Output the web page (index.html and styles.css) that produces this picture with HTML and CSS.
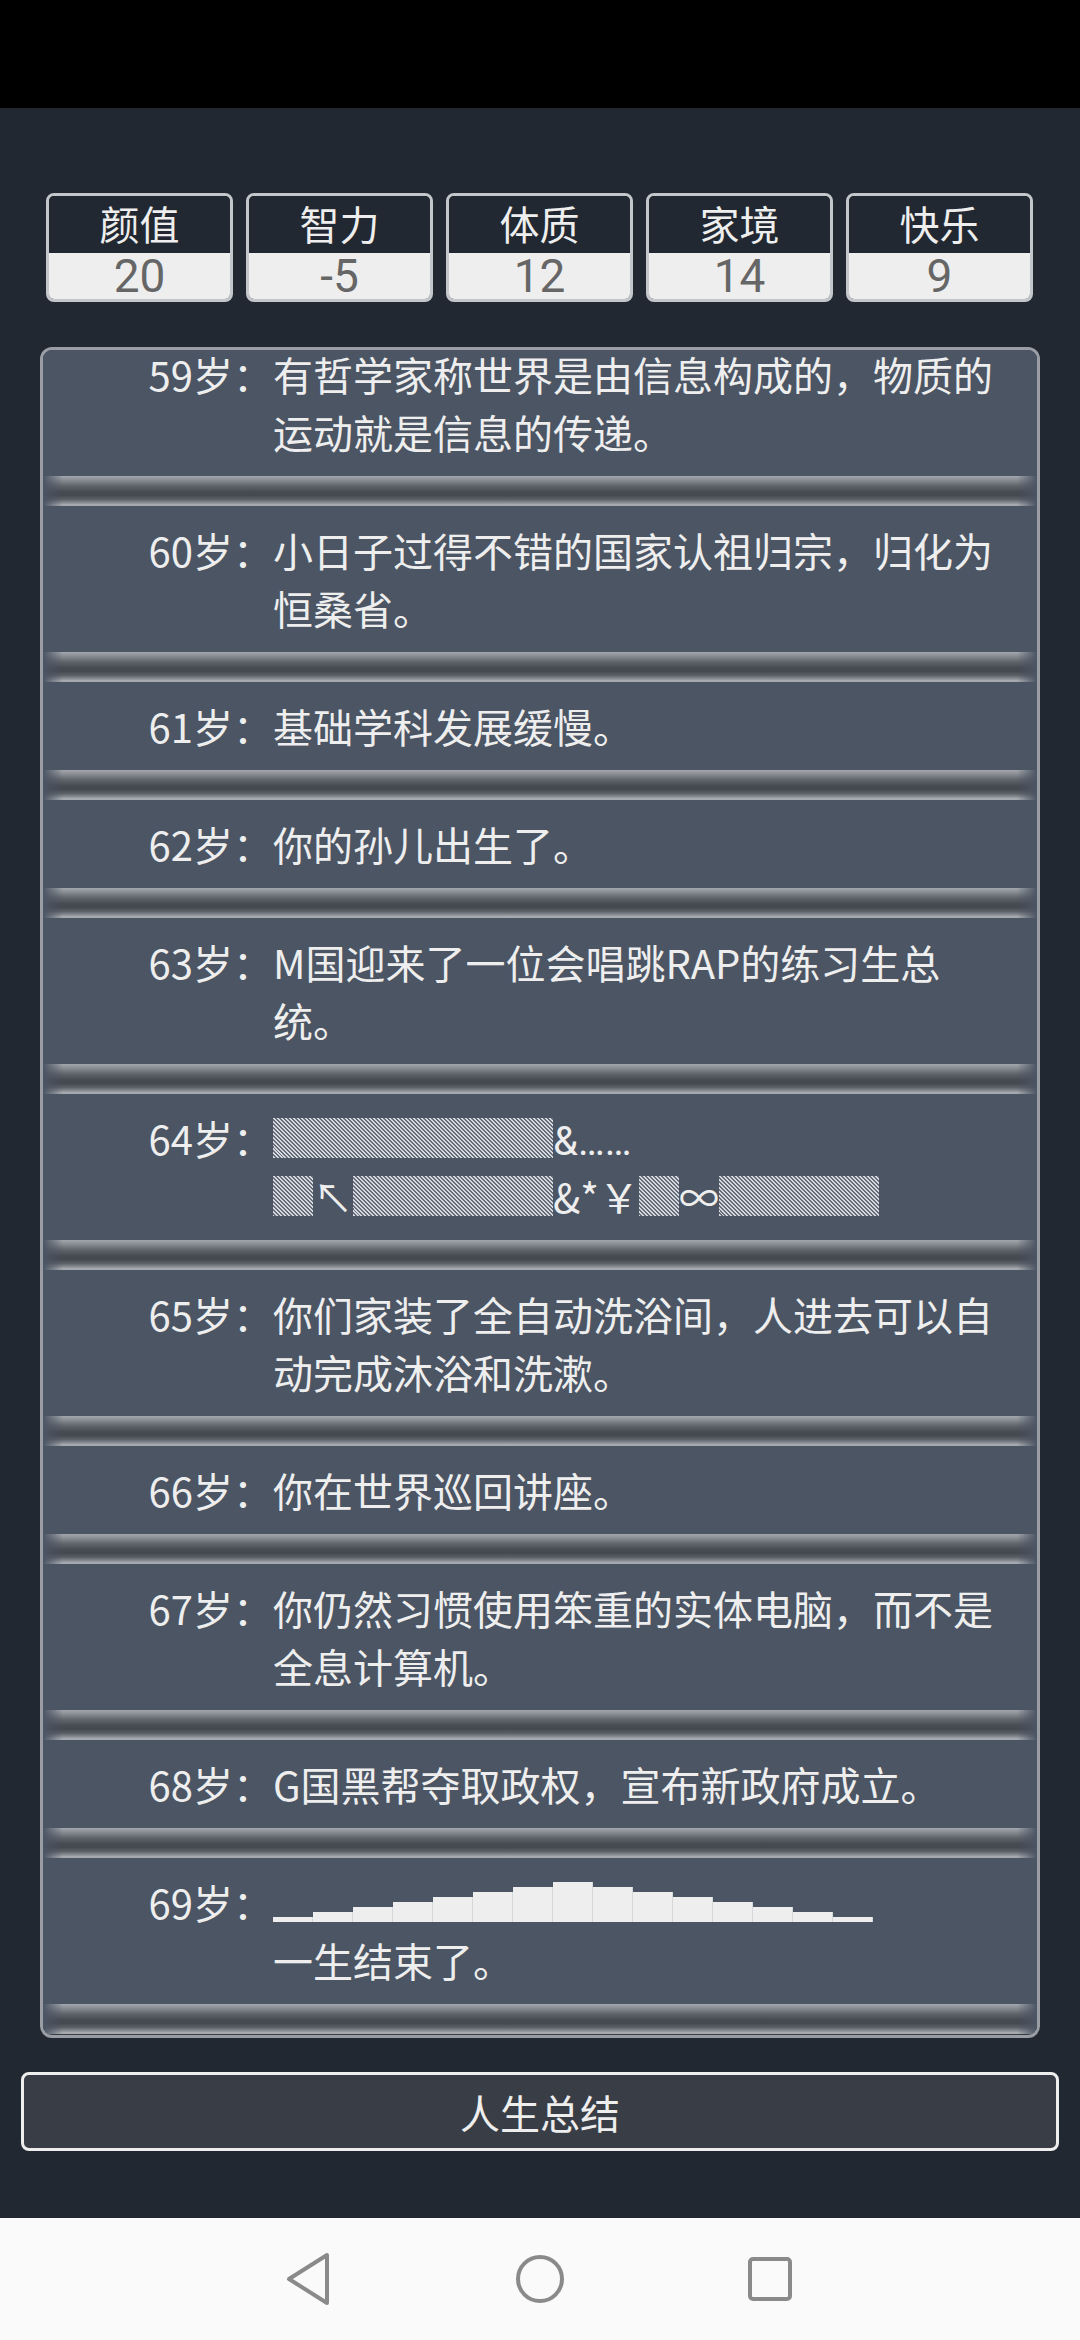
FILE: index.html
```html
<!DOCTYPE html>
<html lang="zh-CN">
<head>
<meta charset="utf-8">
<title>人生重开模拟器</title>
<link rel="stylesheet" href="styles.css">
</head>
<body>
<div class="status"></div>

<ul class="stats">
  <li class="stat"><div class="stat-name">颜值</div><div class="stat-val">20</div></li>
  <li class="stat"><div class="stat-name">智力</div><div class="stat-val">-5</div></li>
  <li class="stat"><div class="stat-name">体质</div><div class="stat-val">12</div></li>
  <li class="stat"><div class="stat-name">家境</div><div class="stat-val">14</div></li>
  <li class="stat"><div class="stat-name">快乐</div><div class="stat-val">9</div></li>
</ul>

<div class="panel">
  <ul class="log">
    <li class="entry"><span class="age">59岁：</span><span class="text">有哲学家称世界是由信息构成的，物质的运动就是信息的传递。</span></li>
    <li class="entry"><span class="age">60岁：</span><span class="text">小日子过得不错的国家认祖归宗，归化为恒桑省。</span></li>
    <li class="entry"><span class="age">61岁：</span><span class="text">基础学科发展缓慢。</span></li>
    <li class="entry"><span class="age">62岁：</span><span class="text">你的孙儿出生了。</span></li>
    <li class="entry"><span class="age">63岁：</span><span class="text">M国迎来了一位会唱跳RAP的练习生总统。</span></li>
    <li class="entry"><span class="age">64岁：</span><span class="text"><span class="hatch w7">░░░░░░░</span><span class="latin">&amp;……</span><br><span class="hatch w1">░</span>↖<span class="hatch w5">░░░░░</span>&amp;*￥<span class="hatch w1">░</span>∞<span class="hatch w4">░░░░</span></span></li>
    <li class="entry"><span class="age">65岁：</span><span class="text">你们家装了全自动洗浴间，人进去可以自动完成沐浴和洗漱。</span></li>
    <li class="entry"><span class="age">66岁：</span><span class="text">你在世界巡回讲座。</span></li>
    <li class="entry"><span class="age">67岁：</span><span class="text">你仍然习惯使用笨重的实体电脑，而不是全息计算机。</span></li>
    <li class="entry"><span class="age">68岁：</span><span class="text">G国黑帮夺取政权，宣布新政府成立。</span></li>
    <li class="entry"><span class="age">69岁：</span><span class="text"><span class="bars"><span class="bar b1">▁</span><span class="bar b2">▂</span><span class="bar b3">▃</span><span class="bar b4">▄</span><span class="bar b5">▅</span><span class="bar b6">▆</span><span class="bar b7">▇</span><span class="bar b8">█</span><span class="bar b7">▇</span><span class="bar b6">▆</span><span class="bar b5">▅</span><span class="bar b4">▄</span><span class="bar b3">▃</span><span class="bar b2">▂</span><span class="bar b1">▁</span></span><br>一生结束了。</span></li>
  </ul>
</div>

<button class="summary" type="button">人生总结</button>

<nav class="navbar">
  <svg class="nav-icon" width="80" height="56" viewBox="0 0 80 56" aria-label="返回">
    <path d="M57 4 L57 52 L19 28 Z" fill="none" stroke="#8a8a8a" stroke-width="4" stroke-linejoin="round"/>
  </svg>
  <svg class="nav-icon" width="80" height="56" viewBox="0 0 80 56" aria-label="主页">
    <circle cx="40" cy="28" r="22" fill="none" stroke="#8a8a8a" stroke-width="4"/>
  </svg>
  <svg class="nav-icon" width="80" height="56" viewBox="0 0 80 56" aria-label="最近">
    <rect x="20" y="8" width="40" height="40" rx="3" fill="none" stroke="#8a8a8a" stroke-width="4"/>
  </svg>
</nav>
</body>
</html>
```

FILE: styles.css
```css
* { box-sizing: border-box; }

html, body {
  margin: 0;
  padding: 0;
}

body {
  width: 1080px;
  height: 2340px;
  background: #222831;
  font-family: "Noto Sans CJK SC", "Noto Sans", sans-serif;
  color: #eeeeee;
  display: flex;
  flex-direction: column;
  overflow: hidden;
}

.status {
  height: 108px;
  background: #000000;
  flex: none;
}

/* stats */
.stats {
  list-style: none;
  margin: 85px 0 0;
  padding: 0 47px 0 46px;
  display: flex;
  gap: 13px;
  flex: none;
}

.stat {
  flex: 1;
  height: 109px;
  border: 3px solid #c3c6ca;
  border-radius: 8px;
  overflow: hidden;
  display: flex;
  flex-direction: column;
}

.stat-name {
  height: 57px;
  line-height: 55px;
  text-align: center;
  font-size: 40px;
  color: #eeeeee;
  background: #222831;
}

.stat-val {
  flex: 1;
  background: #eeeeee;
  color: #666666;
  text-align: center;
  font-family: Roboto, "Noto Sans", sans-serif;
  font-size: 46px;
  line-height: 46px;
}

/* log panel */
.panel {
  margin: 45px 40px 0;
  height: 1691px;
  border: 3px solid #9a9ea4;
  border-radius: 12px;
  overflow: hidden;
  background: #3a3f47;
  flex: none;
}

.log {
  list-style: none;
  margin: -20px 0 0;
  padding: 0;
}

.entry {
  display: grid;
  grid-template-columns: 230px 1fr;
  padding: 15px 32px 45px 0;
  font-size: 40px;
  line-height: 58px;
  color: #eeeeee;
  background:
    linear-gradient(to right, #4b5563 0, rgba(75, 85, 99, 0) 20px, rgba(75, 85, 99, 0) calc(100% - 20px), #4b5563 100%) left bottom / 100% 30px no-repeat,
    linear-gradient(to bottom, #a3a7ad 0%, #8d9197 12%, #61656c 32%, #474b52 52%, #44484f 64%, #5c6067 78%, #8d9197 90%, #b0b3b8 97%, #9a9ea4 100%) left bottom / 100% 30px no-repeat,
    #4b5563;
}

.age {
  text-align: right;
  white-space: nowrap;
}

.text {
  min-width: 0;
}

.latin {
  font-family: Roboto, "Noto Sans", sans-serif;
  line-height: 40px;
}

.hatch {
  display: inline-block;
  vertical-align: top;
  margin-top: 9px;
  height: 40px;
  line-height: 40px;
  overflow: hidden;
  white-space: nowrap;
  color: transparent;
  background: repeating-linear-gradient(45deg, #d6d9dd 0 1.4142px, #656d7a 1.4142px 2.8284px);
}

.w1 { width: 40px; }
.w4 { width: 160px; }
.w5 { width: 200px; }
.w7 { width: 280px; }

.bars {
  display: inline-flex;
  vertical-align: top;
  margin-top: 9px;
  height: 40px;
}

.bar {
  display: block;
  width: 40px;
  height: 40px;
  line-height: 40px;
  overflow: hidden;
  color: transparent;
  background: linear-gradient(#eeeeee, #eeeeee) left bottom / 100% 0 no-repeat;
  box-shadow: inset -1px 0 0 rgba(75, 85, 99, 0.15);
}

.b1 { background-size: 100% 5px; }
.b2 { background-size: 100% 10px; }
.b3 { background-size: 100% 15px; }
.b4 { background-size: 100% 20px; }
.b5 { background-size: 100% 25px; }
.b6 { background-size: 100% 30px; }
.b7 { background-size: 100% 35px; }
.b8 { background-size: 100% 40px; }

/* summary button */
.summary {
  margin: 34px 21px 0;
  height: 79px;
  flex: none;
  border: 3px solid #eeeeee;
  border-radius: 8px;
  background: #393e46;
  color: #eeeeee;
  font-family: "Noto Sans CJK SC", sans-serif;
  font-size: 40px;
  line-height: 70px;
  padding: 0;
}

/* navigation bar */
.navbar {
  margin-top: auto;
  height: 122px;
  flex: none;
  background: #fafafa;
  display: flex;
  justify-content: center;
  align-items: center;
  gap: 150px;
}

.nav-icon {
  display: block;
}
```
